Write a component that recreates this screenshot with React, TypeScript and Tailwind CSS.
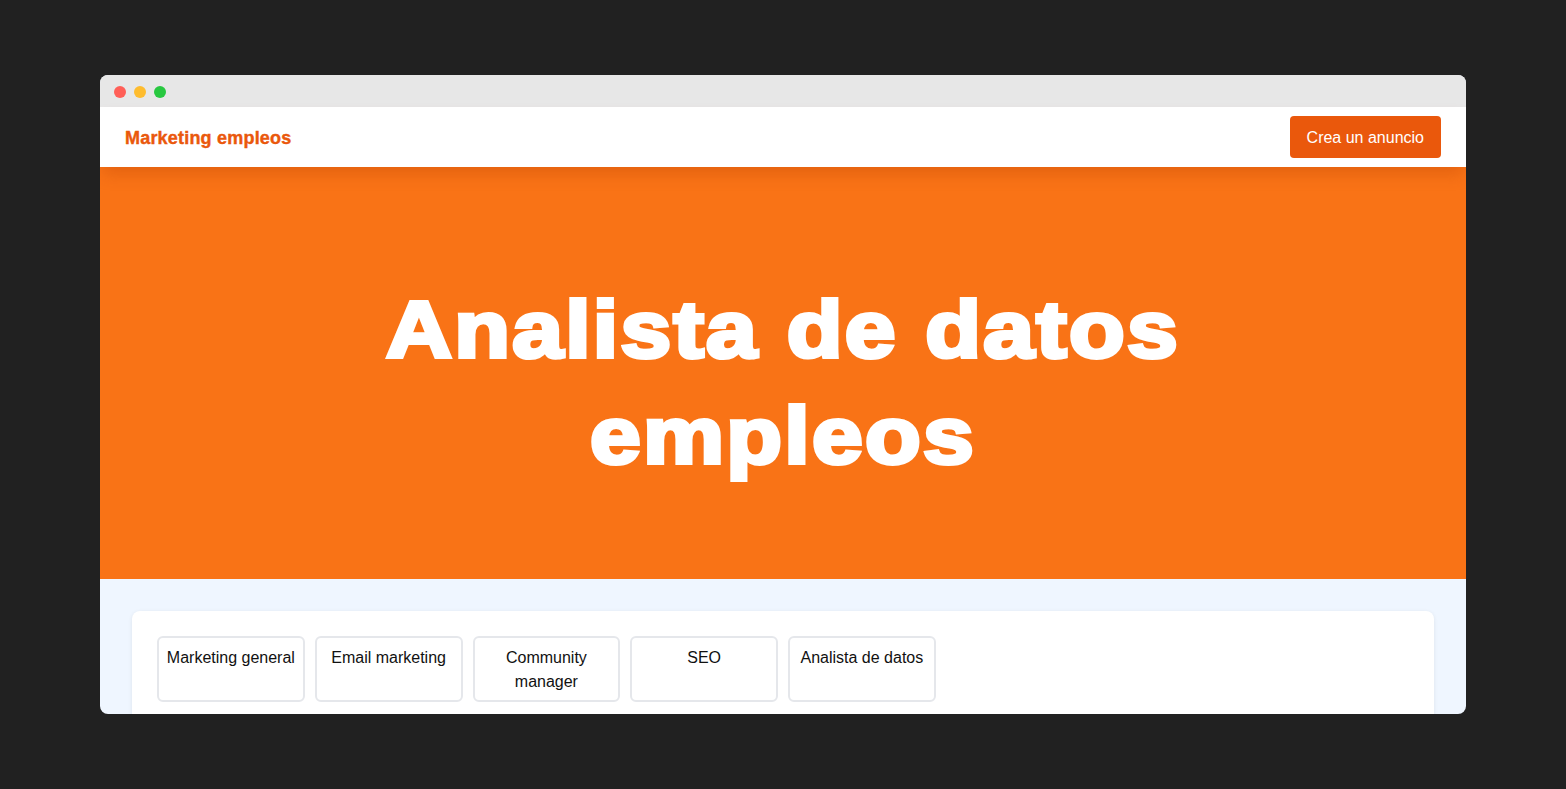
const categories = ['Marketing general', 'Email marketing', 'Community manager', 'SEO', 'Analista de datos']

export default function App() {
  return (
    <div className="min-h-screen bg-[#212121] px-[100px] pt-[75px] font-['Liberation_Sans',Arial,sans-serif]">
      <div className="h-[639px] overflow-hidden rounded-lg bg-[#eff6ff]">
        {/* Title bar */}
        <div className="flex h-8 items-center gap-2 bg-[#e7e7e7] px-[14px] pt-[1px]">
          <span className="h-3 w-3 rounded-full bg-[#ff5f57]" />
          <span className="h-3 w-3 rounded-full bg-[#febc2e]" />
          <span className="h-3 w-3 rounded-full bg-[#28c840]" />
        </div>

        {/* Header */}
        <header className="relative z-10 flex h-[60px] items-center justify-between bg-white px-[25px] shadow-[0_10px_15px_-3px_rgba(180,60,0,0.3)]">
          <a className="pt-[2px] text-[18px] font-bold tracking-[0.2px] text-[#ea580c] [-webkit-text-stroke:0.4px_#ea580c]">
            Marketing empleos
          </a>
          <button className="h-[42px] rounded bg-[#ea580c] px-[17px] pt-[1px] text-base text-white">Crea un anuncio</button>
        </header>

        {/* Hero */}
        <section className="flex h-[412px] items-center justify-center bg-[#f97316] pt-[20px]">
          <h1 className="max-w-[800px] scale-x-[1.14] text-center text-[80px] font-bold leading-[106px] tracking-[2px] text-white [-webkit-text-stroke:4px_white]">
            Analista de datos empleos
          </h1>
        </section>

        {/* Categories */}
        <div className="px-8 pt-8">
          <div className="rounded-lg bg-white p-[25px] shadow-[0_1px_4px_rgba(0,0,0,0.08)]">
            <div className="grid grid-cols-8 gap-[10px]">
              {categories.map((c) => (
                <div
                  key={c}
                  className="h-[66px] rounded-md border-2 border-[#e5e7eb] px-1 pt-[8px] text-center text-base leading-6 text-[#111]"
                >
                  {c}
                </div>
              ))}
            </div>
          </div>
        </div>
      </div>
    </div>
  )
}
